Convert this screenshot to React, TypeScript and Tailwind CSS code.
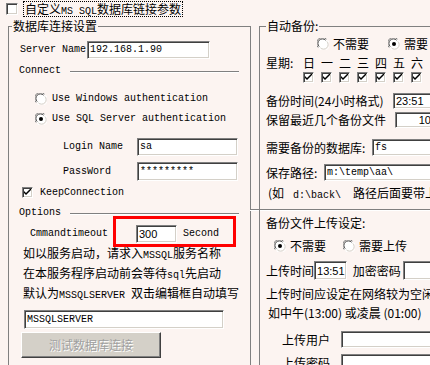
import React from "react";

const line = "h-px bg-[#808080] shadow-[0_1px_0_#ffffff]";
const edit =
  "bg-white border border-t-[#808080] border-l-[#808080] border-b-white border-r-white shadow-[inset_1px_1px_0_#404040,inset_-1px_-1px_0_#d4d0c8] flex items-center overflow-hidden whitespace-nowrap";
const mono = "font-['Liberation_Mono',monospace] text-[10px]";
const inMono = "font-['Liberation_Mono',monospace] text-[10px] leading-[0]";
const sans = "font-['Liberation_Sans',sans-serif] text-[11px]";

const Check = ({ checked, size = 11 }: { checked?: boolean; size?: number }) => (
  <span
    className="shrink-0 bg-white border border-t-[#808080] border-l-[#808080] border-b-white border-r-white shadow-[inset_1px_1px_0_#404040,inset_-1px_-1px_0_#d4d0c8] flex items-center justify-center"
    style={{ width: size, height: size }}
  >
    {checked && (
      <svg width="7" height="7" viewBox="0 0 7 7">
        <path d="M0 2 L0 4 L2 6 L7 1 L7 -1 L2 4 Z" fill="#000" />
      </svg>
    )}
  </span>
);

const Radio = ({ checked }: { checked?: boolean }) => (
  <svg width="12" height="12" viewBox="0 0 12 12" className="shrink-0">
    <circle cx="6" cy="6" r="5.5" fill="#fff" />
    <path d="M1.2 9.5 A5.5 5.5 0 0 1 9.5 1.2" stroke="#808080" fill="none" />
    <path d="M2.2 8.6 A4.3 4.3 0 0 1 8.6 2.2" stroke="#404040" fill="none" />
    <path d="M10.8 2.5 A5.5 5.5 0 0 1 2.5 10.8" stroke="#ffffff" fill="none" />
    <path d="M9.8 3.4 A4.3 4.3 0 0 1 3.4 9.8" stroke="#d4d0c8" fill="none" />
    {checked && <circle cx="6" cy="6" r="2" fill="#000" />}
  </svg>
);

const days = ["日", "一", "二", "三", "四", "五", "六"];

export default function App() {
  return (
    <div className="w-[430px] h-[365px] overflow-hidden bg-[#fcf4f1] text-black font-['Noto_Sans_CJK_SC',sans-serif] text-[12px] leading-[14px]">
      {/* top option */}
      <div className="flex h-[19px] items-start pt-[3px] pl-[6px]">
        <Check size={12} />
        <span className="ml-[5px] -mt-[2px] border border-dotted border-black px-[1px] leading-[14px]">
          自定义<span className={inMono}>MS SQL</span>数据库链接参数
        </span>
      </div>

      <div className="flex">
        {/* left: connection */}
        <fieldset className="ml-[8px] w-[243px] h-[400px] shrink-0 border border-[#808080]">
          <legend className="ml-[3px] px-[1px] leading-[14px]">数据库连接设置</legend>

          <div className="mt-[8px] flex h-[18px] items-center">
            <span className={`${mono} ml-[11px] w-[67px]`}>Server Name</span>
            <div className={`${edit} w-[123px] h-[18px] pl-[2px] ${mono}`}>192.168.1.90</div>
          </div>

          <div className="mt-[6px] flex h-[12px] items-center">
            <span className={`${mono} ml-[10px]`}>Connect</span>
            <div className={`${line} ml-[9px] mr-[11px] flex-1`} />
          </div>

          <div className="mt-[15px] flex h-[13px] items-center">
            <span className="ml-[26px]"><Radio /></span>
            <span className={`${mono} ml-[5px]`}>Use Windows authentication</span>
          </div>

          <div className="mt-[7px] flex h-[13px] items-center">
            <span className="ml-[26px]"><Radio checked /></span>
            <span className={`${mono} ml-[5px] whitespace-nowrap`}>Use SQL Server authentication</span>
          </div>

          <div className="mt-[13px] flex h-[18px] items-center">
            <span className={`${mono} ml-[54px] w-[74px]`}>Login Name</span>
            <div className={`${edit} w-[101px] h-[18px] pl-[2px] ${mono}`}>sa</div>
          </div>

          <div className="mt-[6px] flex h-[19px] items-center">
            <span className={`${mono} ml-[54px] w-[74px]`}>PassWord</span>
            <div className={`${edit} w-[101px] h-[19px] pl-[2px] ${mono}`}>*********</div>
          </div>

          <div className="mt-[5px] flex h-[13px] items-center">
            <span className="ml-[13px]"><Check checked /></span>
            <span className={`${mono} ml-[7px]`}>KeepConnection</span>
          </div>

          <div className="mt-[8px] flex h-[12px] items-center">
            <span className={`${mono} ml-[10px]`}>Options</span>
            <div className={`${line} ml-[9px] mr-[11px] flex-1`} />
          </div>

          <div className="relative mt-[6px] flex h-[18px] items-center">
            <span className={`${mono} ml-[21px] w-[106px]`}>Cmmandtimeout</span>
            <div className={`${edit} w-[41px] h-[18px] pl-[2px] ${sans}`}>300</div>
            <span className={`${mono} ml-[6px]`}>Second</span>
            <div className="absolute left-[104px] top-[-9px] w-[123px] h-[31px] border-[3px] border-[#ff0000]" />
          </div>

          <div className="ml-[14px] whitespace-nowrap">
            <div className="h-[20px] leading-[20px]">
              如以服务启动，请求入<span className={inMono}>MSSQL</span>服务名称
            </div>
            <div className="h-[20px] leading-[20px]">
              在本服务程序启动前会等待<span className={inMono}>sql</span>先启动
            </div>
            <div className="h-[20px] leading-[20px]">
              默认为<span className={inMono}>MSSQLSERVER </span>双击编辑框自动填写
            </div>
          </div>

          <div className={`${edit} mt-[7px] ml-[15px] w-[200px] h-[19px] pl-[2px] ${mono}`}>MSSQLSERVER</div>

          <button className="mt-[3px] ml-[12px] w-[140px] h-[26px] bg-[#d4d0c8] border border-t-white border-l-white border-b-[#404040] border-r-[#404040] shadow-[inset_-1px_-1px_0_#808080] text-[#a0a0a0] text-[12px] [text-shadow:1px_1px_0_#ffffff]">
            测试数据库连接
          </button>
        </fieldset>

        {/* right: backup */}
        <div className="ml-[8px] w-[200px] shrink-0 flex flex-col">
          <fieldset className="h-[190px] border-l border-t border-[#808080]">
            <legend className="ml-[6px] px-[1px] leading-[14px]">自动备份:</legend>

            <div className="mt-[4px] flex h-[13px] items-center whitespace-nowrap">
              <span className="ml-[57px]"><Radio /></span>
              <span className="ml-[4px]">不需要</span>
              <span className="ml-[19px]"><Radio checked /></span>
              <span className="ml-[4px]">需要</span>
            </div>

            <div className="mt-[6px] flex h-[13px] items-center whitespace-nowrap">
              <span className="ml-[6px] w-[37px]">星期:</span>
              {days.map((d) => (
                <span key={d} className="w-[18px]">{d}</span>
              ))}
            </div>

            <div className="mt-[3px] ml-[43px] flex gap-[7px]">
              {days.map((d) => (
                <Check key={d} checked />
              ))}
            </div>

            <div className="mt-[10px] flex h-[16px] items-center whitespace-nowrap">
              <span className="ml-[6px] w-[127px]">备份时间(24小时格式)</span>
              <div className={`${edit} w-[60px] h-[16px] pl-[2px] ${sans}`}>23:51</div>
            </div>

            <div className="mt-[3px] flex h-[16px] items-center whitespace-nowrap">
              <span className="ml-[6px] w-[129px]">保留最近几个备份文件</span>
              <div className={`${edit} w-[40px] h-[16px] justify-end pr-[3px] ${sans}`}>10</div>
            </div>

            <div className="mt-[11px] flex h-[17px] items-center whitespace-nowrap">
              <span className="ml-[6px] w-[106px]">需要备份的数据库:</span>
              <div className={`${edit} w-[80px] h-[17px] pl-[2px] ${mono}`}>fs</div>
            </div>

            <div className="mt-[8px] flex h-[17px] items-center whitespace-nowrap">
              <span className="ml-[6px] w-[58px]">保存路径:</span>
              <div className={`${edit} w-[120px] h-[17px] pl-[2px] ${mono}`}>m:\temp\aa\</div>
            </div>

            <div className="mt-[5px] ml-[8px] h-[14px] whitespace-nowrap">
              (如<span className={`${inMono} ml-[9px]`}>d:\back\</span>
              <span className="ml-[12px]">路径后面要带上\</span>
            </div>
          </fieldset>

          <div className="-ml-[9px] border-t border-[#808080] shadow-[0_1px_0_#ffffff]" />

          <div className="border-l border-[#808080] h-[160px] whitespace-nowrap">
            <div className="mt-[6px] ml-[6px] h-[14px]">备份文件上传设定:</div>
            <div className="mt-[10px] flex h-[12px] items-center">
              <span className="ml-[14px]"><Radio checked /></span>
              <span className="ml-[4px]">不需要</span>
              <span className="ml-[17px]"><Radio /></span>
              <span className="ml-[4px]">需要上传</span>
            </div>
            <div className="mt-[9px] flex h-[19px] items-center">
              <span className="ml-[6px] w-[50px]">上传时间</span>
              <div className={`${edit} w-[35px] h-[19px] pl-[2px] ${sans}`}>13:51</div>
              <span className="ml-[6px] w-[55px]">加密密码</span>
              <div className={`${edit} w-[60px] h-[19px]`} />
            </div>
            <div className="mt-[4px] ml-[6px] h-[19px] leading-[19px]">上传时间应设定在网络较为空闲的时段</div>
            <div className="ml-[8px] h-[19px] leading-[19px]">如中午(13:00) 或凌晨 (01:00)</div>
            <div className="mt-[9px] flex h-[17px] items-center">
              <span className="ml-[22px] w-[59px]">上传用户</span>
              <div className={`${edit} w-[100px] h-[17px]`} />
            </div>
            <div className="mt-[6px] flex h-[17px] items-center">
              <span className="ml-[22px] w-[59px]">上传密码</span>
              <div className={`${edit} w-[100px] h-[17px]`} />
            </div>
          </div>
        </div>
      </div>
    </div>
  );
}
